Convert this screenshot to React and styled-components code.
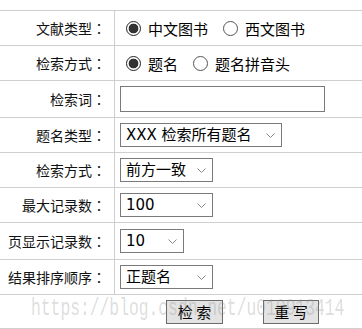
import React from "react";
import styled, { createGlobalStyle } from "styled-components";

const Global = createGlobalStyle`
  html, body { margin: 0; padding: 0; background: #fff; }
  body { font-family: "DejaVu Sans", "Noto Sans CJK SC", sans-serif; color: #000; }
`;

const Page = styled.div`
  position: relative;
  width: 362px;
  height: 329px;
  overflow: hidden;
  padding-top: 10px;
  box-sizing: border-box;
`;

const Form = styled.form`
  display: flex;
  flex-direction: column;
  margin: 0;
`;

const Row = styled.div`
  display: flex;
  box-sizing: border-box;
  height: ${(p) => p.$h}px;
  border-top: 1px solid #cfcfcf;
  border-bottom: ${(p) => (p.$last ? "1px solid #cfcfcf" : "none")};
`;

const Label = styled.div`
  width: 115px;
  box-sizing: border-box;
  border-right: 1px solid #cfcfcf;
  display: flex;
  align-items: center;
  justify-content: flex-end;
  padding-right: 8px;
  font-family: "Noto Sans CJK SC", sans-serif;
  font-size: 14px;
  color: #111;
  white-space: nowrap;
`;

const Colon = styled.span`
  font-family: "Noto Sans CJK TC", "Noto Sans CJK SC", sans-serif;
`;

const Field = styled.div`
  flex: 1;
  display: flex;
  align-items: center;
  padding-left: 5px;
`;

const ButtonField = styled.div`
  flex: 1;
  display: flex;
  align-items: center;
  padding-left: 166px;
  gap: 40px;
`;

const RadioLabel = styled.label`
  display: inline-flex;
  align-items: center;
  gap: 7px;
  margin-left: ${(p) => (p.$first ? "6px" : "15px")};
  font-family: "Noto Sans CJK SC", sans-serif;
  font-size: 15px;
  white-space: nowrap;
`;

const Radio = styled.input.attrs({ type: "radio" })`
  appearance: none;
  margin: 0;
  width: 15px;
  height: 15px;
  box-sizing: border-box;
  border-radius: 50%;
  border: 1px solid #555;
  background: #fff;
  &:checked {
    border-color: #222;
    background: radial-gradient(circle, #333 0 4.6px, #fff 5.2px);
  }
`;

const TextInput = styled.input.attrs({ type: "text" })`
  box-sizing: border-box;
  width: 205px;
  height: 26px;
  margin: 0;
  border: 1px solid #7a7a7a;
  border-radius: 0;
  padding: 0 4px;
  font-size: 15px;
  background: #fff;
`;

const SelectWrap = styled.span`
  position: relative;
  display: inline-flex;
`;

const Select = styled.select`
  appearance: none;
  box-sizing: border-box;
  width: ${(p) => p.$w}px;
  height: 24px;
  margin: 0;
  border: 1px solid #7a7a7a;
  border-radius: 0;
  background: #fff;
  color: #000;
  padding: 0 20px 0 5px;
  font-family: "DejaVu Sans", "Noto Sans CJK SC", sans-serif;
  font-size: 15px;
`;

const Chevron = styled.svg`
  position: absolute;
  right: 7px;
  top: 10px;
  width: 9px;
  height: 5px;
  pointer-events: none;
`;

const Button = styled.button`
  box-sizing: border-box;
  width: ${(p) => p.$w}px;
  height: 24px;
  margin: 0;
  padding: 0;
  border: 1px solid #6a6a6a;
  border-radius: 0;
  background: #e3e3e3;
  color: #000;
  font-family: "Noto Sans CJK SC", sans-serif;
  font-size: 15px;
  white-space: pre;
`;

const Watermark = styled.div`
  position: absolute;
  left: 31px;
  top: 297px;
  font-family: "Liberation Mono", monospace;
  font-size: 24px;
  line-height: 24px;
  color: rgba(140, 140, 140, 0.3);
  transform: scaleX(0.68);
  transform-origin: left top;
  white-space: nowrap;
  pointer-events: none;
`;

const Dropdown = ({ w, value, options }) => (
  <SelectWrap>
    <Select $w={w} defaultValue={value}>
      {options.map((o) => (
        <option key={o}>{o}</option>
      ))}
    </Select>
    <Chevron viewBox="0 0 9 5">
      <polyline points="0.5,0.5 4.5,4.5 8.5,0.5" fill="none" stroke="#8a8a8a" strokeWidth="1" />
    </Chevron>
  </SelectWrap>
);

const FieldLabel = ({ children }) => (
  <Label>
    {children}
    <Colon>：</Colon>
  </Label>
);

export default function App() {
  return (
    <Page>
      <Global />
      <Form onSubmit={(e) => e.preventDefault()}>
        <Row $h={35}>
          <FieldLabel>文献类型</FieldLabel>
          <Field>
            <RadioLabel $first>
              <Radio name="type" defaultChecked />
              中文图书
            </RadioLabel>
            <RadioLabel>
              <Radio name="type" />
              西文图书
            </RadioLabel>
          </Field>
        </Row>
        <Row $h={35}>
          <FieldLabel>检索方式</FieldLabel>
          <Field>
            <RadioLabel $first>
              <Radio name="mode" defaultChecked />
              题名
            </RadioLabel>
            <RadioLabel>
              <Radio name="mode" />
              题名拼音头
            </RadioLabel>
          </Field>
        </Row>
        <Row $h={37}>
          <FieldLabel>检索词</FieldLabel>
          <Field>
            <TextInput />
          </Field>
        </Row>
        <Row $h={35}>
          <FieldLabel>题名类型</FieldLabel>
          <Field>
            <Dropdown w={162} value="XXX 检索所有题名" options={["XXX 检索所有题名", "正题名", "其它题名"]} />
          </Field>
        </Row>
        <Row $h={35}>
          <FieldLabel>检索方式</FieldLabel>
          <Field>
            <Dropdown w={93} value="前方一致" options={["前方一致", "完全匹配", "任意匹配"]} />
          </Field>
        </Row>
        <Row $h={35}>
          <FieldLabel>最大记录数</FieldLabel>
          <Field>
            <Dropdown w={93} value="100" options={["100", "500", "1000"]} />
          </Field>
        </Row>
        <Row $h={37}>
          <FieldLabel>页显示记录数</FieldLabel>
          <Field>
            <Dropdown w={64} value="10" options={["10", "20", "30"]} />
          </Field>
        </Row>
        <Row $h={35}>
          <FieldLabel>结果排序顺序</FieldLabel>
          <Field>
            <Dropdown w={93} value="正题名" options={["正题名", "著者", "出版社"]} />
          </Field>
        </Row>
        <Row $h={35} $last>
          <ButtonField>
            <Button $w={57} type="submit">检 索</Button>
            <Button $w={56} type="reset">重 写</Button>
          </ButtonField>
        </Row>
      </Form>
      <Watermark>https://blog.csdn.net/u010913414</Watermark>
    </Page>
  );
}
